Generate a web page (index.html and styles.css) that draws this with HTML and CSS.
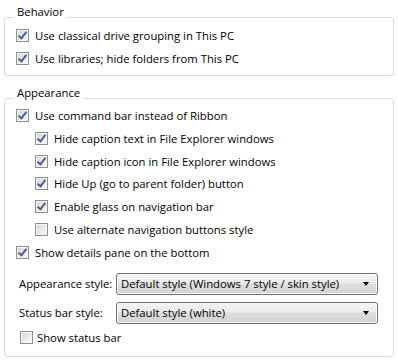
FILE: index.html
```html
<!DOCTYPE html>
<html>
<head>
<meta charset="utf-8">
<link rel="stylesheet" href="styles.css">
</head>
<body>
<div class="page">
  <fieldset class="group g1">
    <legend>Behavior</legend>
    <div class="body">
      <label class="row"><span class="cb on"></span>Use classical drive grouping in This PC</label>
      <label class="row"><span class="cb on"></span>Use libraries; hide folders from This PC</label>
    </div>
  </fieldset>
  <fieldset class="group g2">
    <legend>Appearance</legend>
    <div class="body">
      <label class="row"><span class="cb on"></span>Use command bar instead of Ribbon</label>
      <div class="sub">
        <label class="row"><span class="cb on"></span>Hide caption text in File Explorer windows</label>
        <label class="row"><span class="cb on"></span>Hide caption icon in File Explorer windows</label>
        <label class="row"><span class="cb on"></span>Hide Up (go to parent folder) button</label>
        <label class="row"><span class="cb on"></span>Enable glass on navigation bar</label>
        <label class="row"><span class="cb"></span>Use alternate navigation buttons style</label>
      </div>
      <label class="row"><span class="cb on"></span>Show details pane on the bottom</label>
      <div class="form">
        <div class="frow"><span class="flabel">Appearance style:</span><div class="select"><span>Default style (Windows 7 style / skin style)</span><span class="arrow"></span></div></div>
        <div class="frow"><span class="flabel">Status bar style:</span><div class="select"><span>Default style (white)</span><span class="arrow"></span></div></div>
      </div>
      <label class="row last"><span class="cb"></span>Show status bar</label>
    </div>
  </fieldset>
</div>
</body>
</html>
```
FILE: styles.css
```css
html, body { margin: 0; padding: 0; background: #fff; }
body { font-family: "Open Sans", "Noto Sans", sans-serif; font-size: 11.3px; color: #000; width: 398px; height: 363px; overflow: hidden; }
.page { padding: 4px 4px 0 4px; }
.group {
  margin: 0;
  border: 1px solid #dcdcdc;
  border-radius: 3px;
  padding: 0 0 5px 11px;
  min-width: 0;
}
.group legend {
  box-sizing: border-box;
  height: 26px;
  line-height: 16px;
  padding: 0 3px;
  margin-left: -2px;
}
.g1 .body { margin-top: -6px; }
.g2 { margin-top: 9px; padding-bottom: 7px; }
.g2 .body { margin-top: -7px; }
.row { display: flex; align-items: center; height: 23px; white-space: nowrap; }
.sub .row { height: 22.8px; }
.cb {
  box-sizing: border-box;
  width: 13px; height: 13px;
  border: 1px solid #8e8f8f;
  background: linear-gradient(135deg, #d2d2d2 0%, #e8e8e8 50%, #fafafa 100%);
  box-shadow: inset 0 0 0 1px #f6f6f6;
  margin-right: 6px;
  position: relative;
  flex: none;
}
.cb.on::after {
  content: "";
  position: absolute;
  left: 3px; top: 0px;
  width: 3px; height: 7px;
  border: solid #4b5f94;
  border-width: 0 2px 2px 0;
  transform: rotate(38deg);
}
.sub { padding-left: 19px; }
.form { padding-top: 9px; display: flex; flex-direction: column; gap: 7px; }
.frow { display: flex; align-items: center; height: 22px; padding-left: 3px; }
.flabel { width: 97px; flex: none; }
.select {
  box-sizing: border-box;
  width: 262px; height: 22px;
  border: 1px solid #707070;
  border-radius: 3px;
  background: linear-gradient(#f3f3f3 0%, #ebebeb 45%, #dedede 50%, #d2d2d2 100%);
  box-shadow: inset 0 0 0 1px #fbfbfb;
  display: flex; align-items: center; justify-content: space-between;
  padding: 0 8px 0 4px;
}
.arrow { width: 0; height: 0; border-left: 3.5px solid transparent; border-right: 3.5px solid transparent; border-top: 4px solid #000; }
.last { padding-left: 4px; margin-top: 2px; }
.last .cb { margin-right: 4px; }
```
